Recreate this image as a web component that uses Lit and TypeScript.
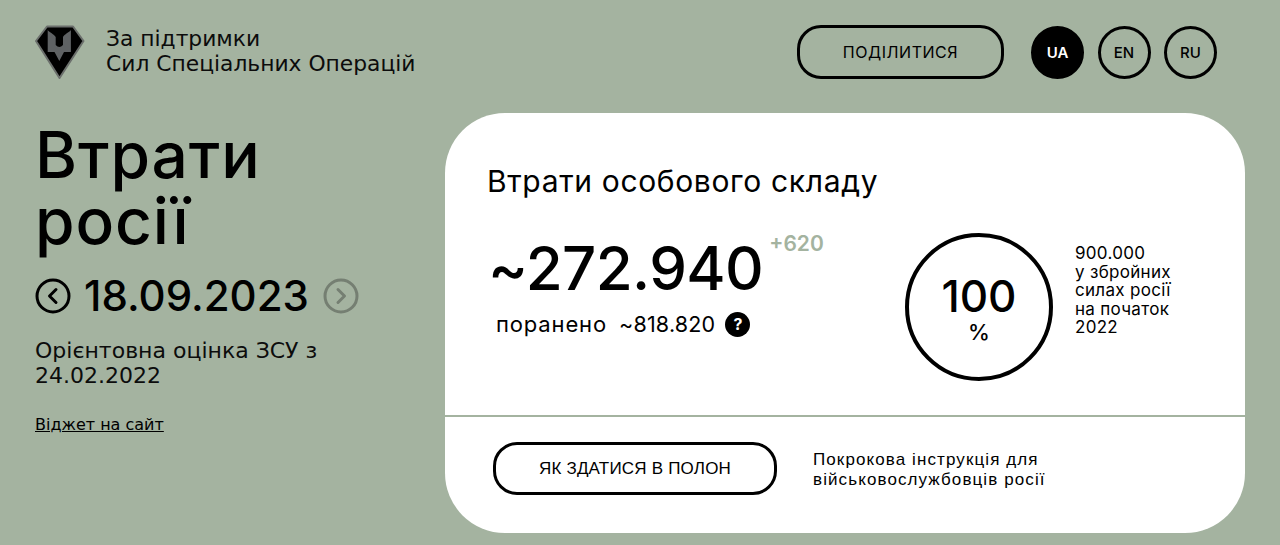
import { LitElement, html, css } from "lit";
import { customElement } from "lit/decorators.js";

@customElement("app-root")
export class AppRoot extends LitElement {
  static styles = css`
    :host { display: block; height: 545px; overflow: hidden; background: #a4b3a0; color: #000; font-family: Inter, "Liberation Sans", sans-serif; }
    * { box-sizing: border-box; }
    .ls { font-family: "Liberation Sans", Arial, sans-serif; }
    .dv { font-family: "DejaVu Sans", sans-serif; }
    .header { display: flex; justify-content: space-between; align-items: flex-start; padding: 25px 63px 0 35px; height: 113px; }
    .brand { display: flex; align-items: center; gap: 20px; }
    .logo { width: 51px; height: 55px; display: block; }
    .brand-text { font-size: 21.8px; line-height: 25px; letter-spacing: 0; color: #0c0c0c; margin-top: -3px; }
    .actions { display: flex; align-items: center; }
    .share { width: 207px; height: 54px; border: 3px solid #000; border-radius: 24px; display: flex; align-items: center; justify-content: center; font-size: 16px; letter-spacing: 0.55px; margin-right: 27px; }
    .lang { width: 53px; height: 53px; border: 3px solid #000; border-radius: 50%; display: flex; align-items: center; justify-content: center; font-size: 15px; font-weight: 500; margin-right: 13.5px; }
    .lang:last-child { margin-right: 0; }
    .lang.active { background: #000; color: #fff; font-weight: 600; }
    .main { display: flex; padding-left: 35px; }
    .left { width: 410px; flex: none; }
    h1 { margin: 0; font-weight: 450; font-size: 64px; line-height: 66px; letter-spacing: 0.9px; padding-top: 9px; }
    .date { display: flex; align-items: center; gap: 14px; margin-top: 17px; }
    .date-text { font-size: 42px; line-height: 50px; letter-spacing: 0; font-weight: 450; margin-left: -1px; }
    .nav { width: 36px; height: 36px; display: block; flex: none; }
    .est { font-size: 22px; line-height: 25px; letter-spacing: 0; margin-top: 17px; color: #0c0c0c; }
    .widget { display: inline-block; margin-top: 27px; font-size: 16px; line-height: 20px; letter-spacing: 0; color: #000; text-decoration: underline; }
    .card { width: 800px; height: 420px; background: #fff; border-radius: 60px; display: flex; flex-direction: column; }
    .top { height: 304px; padding: 50px 42px 0; border-bottom: 2px solid #a4b3a0; }
    h2 { margin: 0; font-weight: 420; font-size: 30px; line-height: 36px; letter-spacing: 0.65px; }
    .stats { display: flex; margin-top: 34px; }
    .num-col { width: 418px; flex: none; }
    .num-row { display: flex; align-items: flex-start; }
    .num { font-size: 60px; line-height: 72px; letter-spacing: -0.6px; font-weight: 450; margin-top: -1px; margin-left: 1px; }
    .plus { font-size: 21px; line-height: 24px; font-weight: 600; color: #a4b3a0; margin-left: 6px; margin-top: -1px; }
    .wounded { display: flex; align-items: center; line-height: 26px; margin-left: 9px; margin-top: 7px; }
    .wounded .lbl { font-size: 22px; letter-spacing: 0.85px; }
    .wounded .val { font-size: 21.5px; letter-spacing: 0.2px; margin-left: 12px; }
    .q { width: 25px; height: 25px; border-radius: 50%; background: #000; color: #fff; font-size: 16px; font-weight: 700; display: flex; align-items: center; justify-content: center; margin-left: 10px; letter-spacing: 0; }
    .circle { width: 148px; height: 148px; border-radius: 50%; border: 4px solid #000; display: flex; flex-direction: column; align-items: center; justify-content: center; flex: none; padding-top: 3px; }
    .pct { font-size: 44px; line-height: 46px; font-weight: 450; }
    .pct-s { font-size: 22px; line-height: 26px; font-weight: 500; }
    .note { font-size: 17px; line-height: 18.5px; letter-spacing: 0.3px; margin-left: 22px; margin-top: 11px; }
    .bottom { display: flex; align-items: center; padding: 25px 48px 0; }
    .surrender { width: 284px; height: 53px; border: 3px solid #000; border-radius: 24px; display: flex; align-items: center; justify-content: center; font-size: 17px; letter-spacing: 0.2px; }
    .instr { font-size: 17px; line-height: 20px; letter-spacing: 1.1px; margin-left: 36px; margin-top: 2px; }
  `;

  render() {
    return html`
      <div class="header">
        <div class="brand">
          <svg class="logo" viewBox="0 0 51 55">
            <path d="M12 1.5H38L48.5 16L24.5 53L1 16Z" fill="#000" stroke="#6b6f6c" stroke-width="2" stroke-linejoin="round"/>
            <path d="M12.7 5C14.5 7.5 19 9 20.7 12V20Q24.3 24 28 20V12C29.5 9 34 7.5 35.9 5V27H29L24.3 36L19.5 27H12.7Z" fill="#5f6264"/>
          </svg>
          <div class="brand-text dv">За підтримки<br />Сил Спеціальних Операцій</div>
        </div>
        <div class="actions">
          <div class="share">ПОДІЛИТИСЯ</div>
          <div class="lang active">UA</div>
          <div class="lang">EN</div>
          <div class="lang">RU</div>
        </div>
      </div>
      <div class="main">
        <div class="left">
          <h1>Втрати<br />росії</h1>
          <div class="date">
            <svg class="nav" viewBox="0 0 36 36" fill="none" stroke="#000" stroke-width="3"><circle cx="18" cy="18" r="16"/><path d="M21 11.5L14.5 18L21 24.5" stroke-linecap="round" stroke-linejoin="round"/></svg>
            <div class="date-text">18.09.2023</div>
            <svg class="nav" viewBox="0 0 36 36" fill="none" stroke="#757f72" stroke-width="3"><circle cx="18" cy="18" r="16"/><path d="M15 11.5L21.5 18L15 24.5" stroke-linecap="round" stroke-linejoin="round"/></svg>
          </div>
          <div class="est dv">Орієнтовна оцінка ЗСУ з<br />24.02.2022</div>
          <a class="widget dv">Віджет на сайт</a>
        </div>
        <div class="card">
          <div class="top">
            <h2>Втрати особового складу</h2>
            <div class="stats">
              <div class="num-col">
                <div class="num-row"><div class="num">~272.940</div><div class="plus">+620</div></div>
                <div class="wounded"><span class="lbl">поранено</span><span class="val">~818.820</span><span class="q">?</span></div>
              </div>
              <div class="circle"><div class="pct">100</div><div class="pct-s">%</div></div>
              <div class="note">900.000<br />у збройних<br />силах росії<br />на початок<br />2022</div>
            </div>
          </div>
          <div class="bottom">
            <div class="surrender ls">ЯК ЗДАТИСЯ В ПОЛОН</div>
            <div class="instr ls">Покрокова інструкція для<br />військовослужбовців росії</div>
          </div>
        </div>
      </div>
    `;
  }
}
